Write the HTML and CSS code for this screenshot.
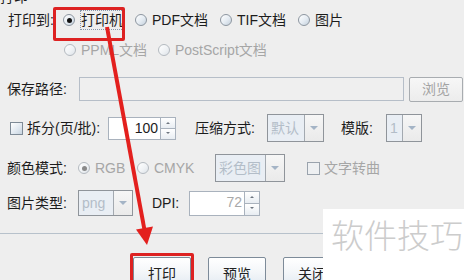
FILE: index.html
```html
<!DOCTYPE html>
<html>
<head>
<meta charset="utf-8">
<link rel="stylesheet" href="styles.css">
</head>
<body>
<div class="dlg">
  <div class="cut-title">打印</div>

  <div class="row r1">
    <span class="lbl w55">打印到:</span>
    <span class="opt w72"><span class="radio on"></span><span class="focus">打印机</span></span>
    <span class="opt w85"><span class="radio"></span>PDF文档</span>
    <span class="opt w78"><span class="radio"></span>TIF文档</span>
    <span class="opt"><span class="radio"></span>图片</span>
  </div>

  <div class="row r2">
    <span class="opt w94 dis"><span class="radio"></span>PPML文档</span>
    <span class="opt dis"><span class="radio"></span>PostScript文档</span>
  </div>

  <div class="row r3">
    <span class="lbl w72">保存路径:</span>
    <span class="field path"></span>
    <span class="btn browse">浏览</span>
  </div>

  <div class="row r4">
    <span class="opt w98"><span class="check"></span>拆分(页/批):</span>
    <span class="spin"><span class="spin-field f52">100</span><span class="spin-btns"><span class="sb up"></span><span class="sb down"></span></span></span>
    <span class="lbl w72 ml19">压缩方式:</span>
    <span class="combo"><span class="combo-val v37">默认</span><span class="combo-arrow"></span></span>
    <span class="lbl w45 ml17">模版:</span>
    <span class="combo"><span class="combo-val v16">1</span><span class="combo-arrow"></span></span>
  </div>

  <div class="row r5">
    <span class="lbl w71">颜色模式:</span>
    <span class="opt w59 dis"><span class="radio on"></span>RGB</span>
    <span class="opt w78 dis"><span class="radio"></span>CMYK</span>
    <span class="combo"><span class="combo-val v50">彩色图</span><span class="combo-arrow"></span></span>
    <span class="opt dis ml22"><span class="check"></span>文字转曲</span>
  </div>

  <div class="row r6">
    <span class="lbl w71">图片类型:</span>
    <span class="combo"><span class="combo-val v35">png</span><span class="combo-arrow"></span></span>
    <span class="lbl w37 ml19">DPI:</span>
    <span class="spin"><span class="spin-field f55 grey">72</span><span class="spin-btns"><span class="sb up"></span><span class="sb down"></span></span></span>
  </div>

  <div class="sep"></div>

  <div class="row buttons">
    <span class="btn act">打印</span>
    <span class="btn act">预览</span>
    <span class="btn act">关闭</span>
  </div>

  <div class="mark">软件技巧</div>

  <div class="hl hl-top"></div>
  <div class="hl hl-bottom"></div>

  <svg class="arrow" width="464" height="280" viewBox="0 0 464 280">
    <line x1="107" y1="27" x2="144.5" y2="230" stroke="#e3201e" stroke-width="4"/>
    <polygon points="136,229.5 153,226.5 147,245" fill="#e3201e"/>
  </svg>
</div>
</body>
</html>
```

FILE: styles.css
```css
* { box-sizing: border-box; }
html, body { margin: 0; padding: 0; }
body {
  background: #eeeeee;
  font-family: "Liberation Sans", "Noto Sans CJK SC", sans-serif;
  font-size: 14px;
  color: #1c1c1c;
}
.dlg {
  position: relative;
  width: 464px;
  height: 280px;
  overflow: hidden;
  display: flex;
  flex-direction: column;
}
.cut-title {
  flex: none;
  height: 14px;
  line-height: 14px;
  margin-top: -10px;
  white-space: nowrap;
}
.row {
  flex: none;
  display: flex;
  align-items: center;
  white-space: nowrap;
  line-height: 16px;
}
.r1 { margin-top: 4px; height: 24px; padding-left: 8px; }
.r2 { margin-top: 6px; height: 24px; padding-left: 64px; }
.r3 { margin-top: 14px; height: 26px; padding-left: 7px; }
.r4 { margin-top: 12px; height: 28px; padding-left: 10px; }
.r5 { margin-top: 12px; height: 28px; padding-left: 7px; }
.r6 { margin-top: 8px; height: 26px; padding-left: 7px; }

.lbl { display: inline-block; flex: none; }
.w37 { width: 37px; }
.w45 { width: 45px; }
.w55 { width: 55px; }
.w59 { width: 59px; }
.w71 { width: 71px; }
.w72 { width: 72px; }
.w78 { width: 78px; }
.w85 { width: 85px; }
.w94 { width: 94px; }
.w98 { width: 98px; }
.ml17 { margin-left: 17px; }
.ml19 { margin-left: 19px; }
.ml22 { margin-left: 22px; }

.opt {
  display: inline-flex;
  align-items: center;
  flex: none;
}
.dis { color: #a6a6a6; }

.radio {
  position: relative;
  width: 12px;
  height: 12px;
  border-radius: 50%;
  border: 1px solid #8d96a0;
  background: linear-gradient(135deg, #ffffff 0%, #e4ebf2 55%, #c3cfdb 100%);
  margin-right: 5px;
  flex: none;
}
.dis .radio { border-color: #b4bac0; background: linear-gradient(135deg, #ffffff 0%, #eef1f4 60%, #dbe1e7 100%); }
.radio.on::after {
  content: "";
  position: absolute;
  left: 2.5px;
  top: 2.5px;
  width: 5px;
  height: 5px;
  border-radius: 50%;
  background: #111;
}
.dis .radio.on::after { background: #8a8a8a; }

.check {
  width: 13px;
  height: 13px;
  border: 1px solid #7e8a96;
  background: linear-gradient(135deg, #ffffff 0%, #dfe7ef 60%, #c7d3df 100%);
  margin-right: 4px;
  flex: none;
}
.dis .check { border-color: #9aa3ad; background: #eef0f2; }

.focus {
  padding: 1px 0;
  border: 1px dotted #8796aa;
  line-height: 16px;
}

.field {
  height: 24px;
  border: 1px solid #b6bec8;
  background: #efefef;
  flex: none;
}
.path { width: 325px; }

.btn {
  display: inline-flex;
  align-items: center;
  justify-content: center;
  flex: none;
  border: 1px solid #a8acb0;
  border-radius: 2px;
}
.browse {
  width: 54px;
  height: 25px;
  margin-left: 5px;
  color: #a3a3a3;
  background: linear-gradient(#f7f7f7, #ececec);
}

.spin {
  display: inline-flex;
  height: 23px;
  flex: none;
}
.spin-field {
  height: 23px;
  border: 1px solid #a9b2bd;
  border-right: none;
  background: #ffffff;
  text-align: right;
  padding-right: 2px;
  line-height: 21px;
}
.spin-field.f52 { width: 52px; }
.spin-field.f55 { width: 55px; }
.spin-field.grey { color: #a8a8a8; }
.spin-btns {
  display: flex;
  flex-direction: column;
  width: 16px;
  height: 23px;
}
.sb {
  position: relative;
  flex: 1;
  border: 1px solid #a9b2bd;
  background: linear-gradient(#ffffff, #e8edf2);
}
.sb.down { border-top: none; }
.sb::after {
  content: "";
  position: absolute;
  left: 5px;
  top: 4px;
  border-left: 2px solid transparent;
  border-right: 2px solid transparent;
}
.sb.up::after { border-bottom: 2px solid #6e7680; }
.sb.down::after { border-top: 2px solid #6e7680; top: 3px; }

.combo {
  display: inline-flex;
  height: 28px;
  border: 1px solid #8f949a;
  flex: none;
}
.combo-val {
  height: 26px;
  background: #e9eef4;
  border-right: 1px solid #a3a9b0;
  color: #b3bdc8;
  line-height: 26px;
  padding-left: 3px;
  overflow: hidden;
}
.v16 { width: 16px; }
.v35 { width: 35px; }
.v37 { width: 37px; }
.v50 { width: 50px; }
.combo-arrow {
  position: relative;
  width: 18px;
  height: 26px;
  background: linear-gradient(#f6f6f6, #eaeaea);
}
.combo-arrow::after {
  content: "";
  position: absolute;
  left: 5px;
  top: 11px;
  border-left: 4px solid transparent;
  border-right: 4px solid transparent;
  border-top: 4px solid #a4b4c6;
}
.r6 .combo { height: 26px; }
.r6 .combo-val { height: 24px; line-height: 24px; }
.r6 .combo-arrow { height: 24px; }
.r6 .combo-arrow::after { top: 10px; }
.r6 .spin, .r6 .spin-field, .r6 .spin-btns { height: 25px; }

.sep {
  flex: none;
  margin-top: 17px;
  height: 1px;
  background: #b7c1cb;
}

.buttons {
  margin-top: 23px;
  height: 34px;
  padding-left: 133px;
  gap: 17px;
  align-items: flex-start;
}
.btn.act {
  width: 58px;
  height: 34px;
  border: 1px solid #7d8b99;
  background: linear-gradient(#ffffff 0%, #f3f6f9 45%, #dde6ef 100%);
  color: #222;
}

.mark {
  position: absolute;
  left: 323px;
  top: 209px;
  right: 0;
  bottom: 0;
  background: #ffffff;
  color: #cccccc;
  font-family: "Noto Sans CJK SC", sans-serif;
  font-weight: 300;
  font-size: 33px;
  line-height: 40px;
  padding-left: 8px;
  padding-top: 5px;
  white-space: nowrap;
  overflow: hidden;
}

.hl {
  position: absolute;
  border: 3px solid #dd2222;
  border-radius: 2px;
}
.hl-top { left: 53px; top: 7px; width: 72px; height: 34px; }
.hl-bottom { left: 130px; top: 253px; width: 64px; height: 32px; }

.arrow {
  position: absolute;
  left: 0;
  top: 0;
}
```
